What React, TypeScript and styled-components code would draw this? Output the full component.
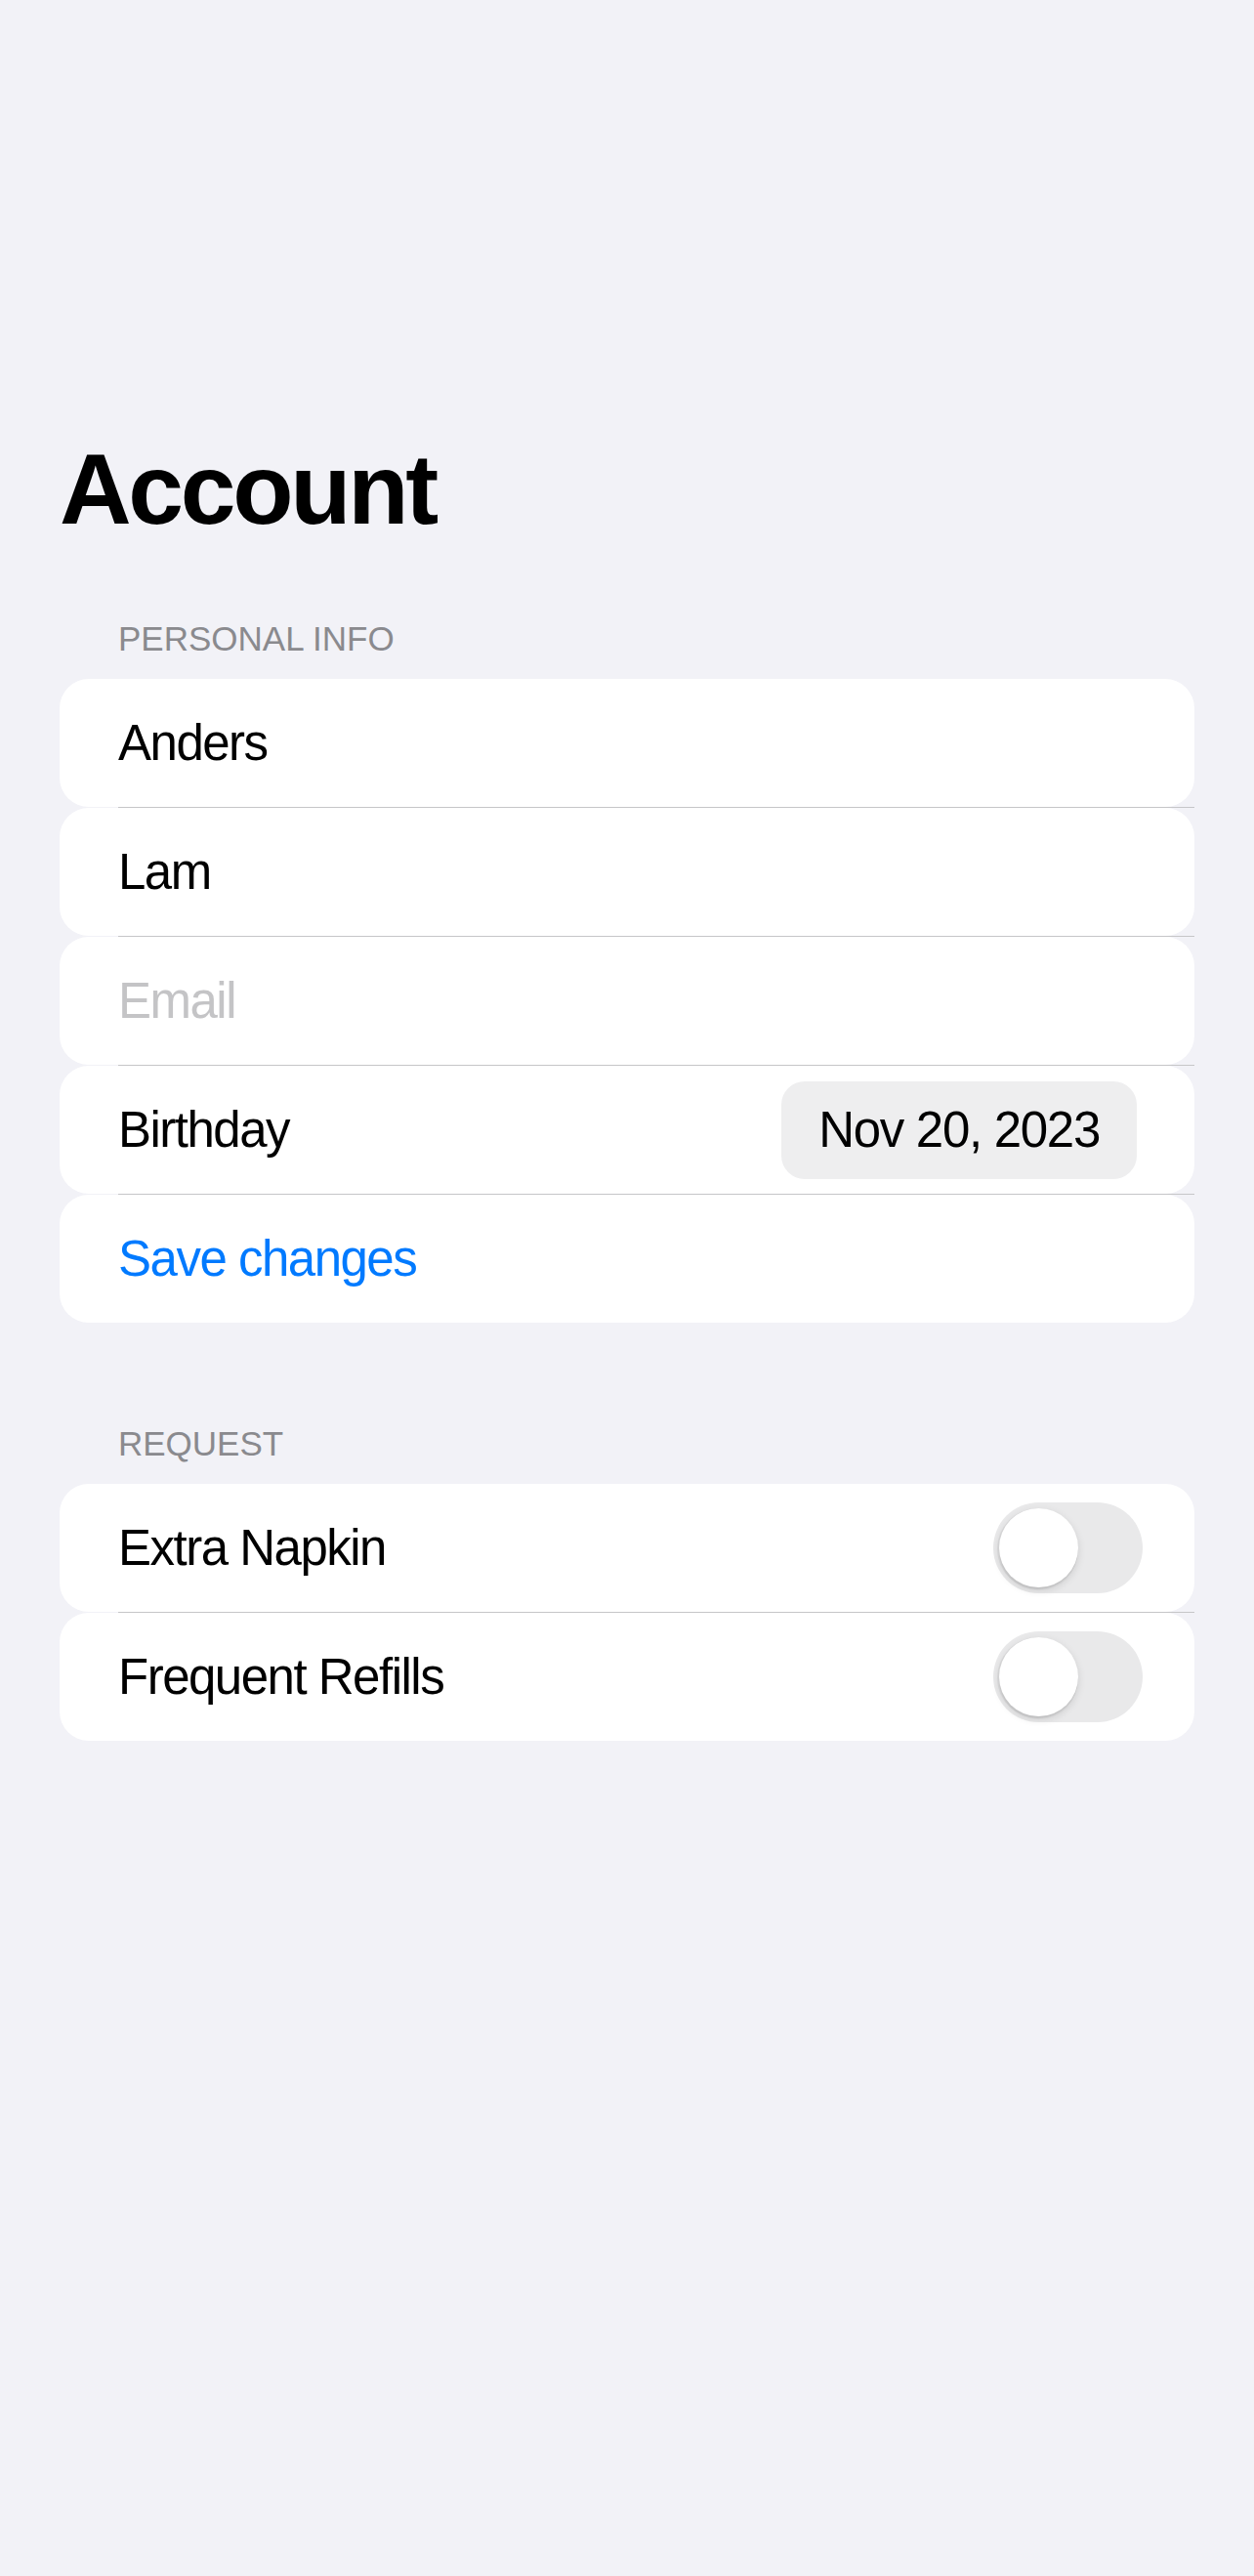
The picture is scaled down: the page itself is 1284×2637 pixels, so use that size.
import React from "react";
import styled, { createGlobalStyle } from "styled-components";

const GlobalStyle = createGlobalStyle`
  html, body {
    margin: 0;
    padding: 0;
    background: #f2f2f7;
  }
  body {
    font-family: "Liberation Sans", Arial, sans-serif;
    -webkit-font-smoothing: antialiased;
  }
`;

const Page = styled.main`
  min-height: 2637px;
  box-sizing: border-box;
  padding: 450px 61px 0 61px;
  background: #f2f2f7;
  display: flex;
  flex-direction: column;
`;

const Title = styled.h1`
  margin: 0 0 84px 0;
  font-family: "Liberation Sans", Arial, sans-serif;
  font-weight: 700;
  font-size: 102px;
  line-height: 102px;
  letter-spacing: -3.3px;
  color: #000;
`;

const Section = styled.section<{ $gapBefore?: number }>`
  display: flex;
  flex-direction: column;
  margin-top: ${(p) => p.$gapBefore ?? 0}px;
`;

const SectionHeader = styled.h2`
  margin: 0 0 24px 0;
  padding-left: 60px;
  font-family: "Liberation Sans", Arial, sans-serif;
  font-weight: 400;
  font-size: 35px;
  line-height: 35px;
  color: #8a8a8e;
  text-transform: uppercase;
`;

const List = styled.div`
  display: flex;
  flex-direction: column;
`;

const Row = styled.div`
  height: 131px;
  box-sizing: border-box;
  background: #fff;
  border-radius: 30px;
  padding: 0 53px 0 60px;
  display: flex;
  align-items: center;
  justify-content: space-between;
`;

const Separator = styled.div`
  height: 1px;
  margin-left: 60px;
  background: #c6c6c8;
`;

const Label = styled.span<{ $tone?: "normal" | "placeholder" | "action" }>`
  font-family: "Liberation Sans", Arial, sans-serif;
  font-size: 51px;
  line-height: 61px;
  letter-spacing: -1.5px;
  color: ${(p) =>
    p.$tone === "placeholder" ? "#c4c4c6" : p.$tone === "action" ? "#007aff" : "#000"};
`;

const DatePill = styled.span`
  height: 100px;
  box-sizing: border-box;
  padding: 0 38px;
  margin-right: 6px;
  border-radius: 24px;
  background: #eeeeef;
  display: flex;
  align-items: center;
  font-family: "Liberation Sans", Arial, sans-serif;
  font-size: 51px;
  letter-spacing: -1.3px;
  color: #000;
`;

const Track = styled.span`
  width: 153px;
  height: 93px;
  box-sizing: border-box;
  padding: 6px;
  border-radius: 47px;
  background: #e9e9ea;
  display: flex;
  align-items: center;
`;

const Thumb = styled.span`
  width: 81px;
  height: 81px;
  border-radius: 50%;
  background: #fff;
  box-shadow: -1px 1px 0 1px rgba(0, 0, 0, 0.05), 0 3px 8px rgba(0, 0, 0, 0.12),
    0 3px 1px rgba(0, 0, 0, 0.04);
`;

const Toggle = () => (
  <Track>
    <Thumb />
  </Track>
);

type Item = { key: string; node: React.ReactNode };

const Group = ({ items }: { items: Item[] }) => (
  <List>
    {items.map((it, i) => (
      <React.Fragment key={it.key}>
        <Row>{it.node}</Row>
        {i < items.length - 1 && <Separator />}
      </React.Fragment>
    ))}
  </List>
);

export default function App() {
  const personal: Item[] = [
    { key: "first", node: <Label>Anders</Label> },
    { key: "last", node: <Label>Lam</Label> },
    { key: "email", node: <Label $tone="placeholder">Email</Label> },
    {
      key: "birthday",
      node: (
        <>
          <Label>Birthday</Label>
          <DatePill>Nov 20, 2023</DatePill>
        </>
      ),
    },
    { key: "save", node: <Label $tone="action">Save changes</Label> },
  ];

  const request: Item[] = [
    {
      key: "napkin",
      node: (
        <>
          <Label>Extra Napkin</Label>
          <Toggle />
        </>
      ),
    },
    {
      key: "refills",
      node: (
        <>
          <Label>Frequent Refills</Label>
          <Toggle />
        </>
      ),
    },
  ];

  return (
    <>
      <GlobalStyle />
      <Page>
        <Title>Account</Title>
        <Section>
          <SectionHeader>Personal Info</SectionHeader>
          <Group items={personal} />
        </Section>
        <Section $gapBefore={106}>
          <SectionHeader>Request</SectionHeader>
          <Group items={request} />
        </Section>
      </Page>
    </>
  );
}
